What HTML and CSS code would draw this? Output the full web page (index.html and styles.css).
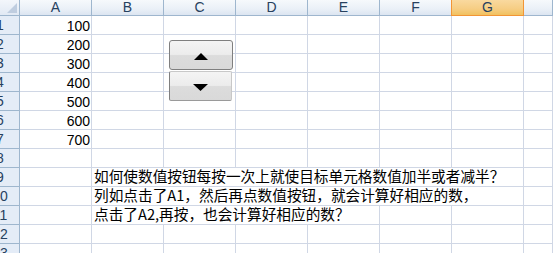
FILE: index.html
```html
<!DOCTYPE html>
<html lang="zh-CN">
<head>
    <meta charset="UTF-8">
    <title>Sheet1</title>
    <link rel="stylesheet" href="styles.css">
</head>
<body>
    <div class="sheet">
        <!-- column headers -->
        <div class="corner"></div>
        <div class="ch">A</div>
        <div class="ch">B</div>
        <div class="ch">C</div>
        <div class="ch">D</div>
        <div class="ch">E</div>
        <div class="ch">F</div>
        <div class="ch active">G</div>
        <div class="ch"></div>

        <div class="rh"><span>1</span></div><div class="c num">100</div><div class="c"></div><div class="c"></div><div class="c"></div><div class="c"></div><div class="c"></div><div class="c"></div><div class="c"></div>
        <div class="rh"><span>2</span></div><div class="c num">200</div><div class="c"></div><div class="c"></div><div class="c"></div><div class="c"></div><div class="c"></div><div class="c"></div><div class="c"></div>
        <div class="rh"><span>3</span></div><div class="c num">300</div><div class="c"></div><div class="c"></div><div class="c"></div><div class="c"></div><div class="c"></div><div class="c"></div><div class="c"></div>
        <div class="rh"><span>4</span></div><div class="c num">400</div><div class="c"></div><div class="c"></div><div class="c"></div><div class="c"></div><div class="c"></div><div class="c"></div><div class="c"></div>
        <div class="rh"><span>5</span></div><div class="c num">500</div><div class="c"></div><div class="c"></div><div class="c"></div><div class="c"></div><div class="c"></div><div class="c"></div><div class="c"></div>
        <div class="rh"><span>6</span></div><div class="c num">600</div><div class="c"></div><div class="c"></div><div class="c"></div><div class="c"></div><div class="c"></div><div class="c"></div><div class="c"></div>
        <div class="rh"><span>7</span></div><div class="c num">700</div><div class="c"></div><div class="c"></div><div class="c"></div><div class="c"></div><div class="c"></div><div class="c"></div><div class="c"></div>
        <div class="rh"><span>8</span></div><div class="c"></div><div class="c"></div><div class="c"></div><div class="c"></div><div class="c"></div><div class="c"></div><div class="c"></div><div class="c"></div>
        <div class="rh"><span>9</span></div><div class="c"></div><div class="c txt span6">如何使数值按钮每按一次上就使目标单元格数值加半或者减半？</div><div class="c"></div>
        <div class="rh"><span>10</span></div><div class="c"></div><div class="c txt span6">列如点击了A1，然后再点数值按钮，就会计算好相应的数，</div><div class="c"></div>
        <div class="rh"><span>11</span></div><div class="c"></div><div class="c txt span4">点击了A2,再按，也会计算好相应的数？</div><div class="c"></div><div class="c"></div><div class="c"></div>
        <div class="rh"><span>12</span></div><div class="c"></div><div class="c"></div><div class="c"></div><div class="c"></div><div class="c"></div><div class="c"></div><div class="c"></div><div class="c"></div>
        <div class="rh"><span>13</span></div><div class="c"></div><div class="c"></div><div class="c"></div><div class="c"></div><div class="c"></div><div class="c"></div><div class="c"></div><div class="c"></div>
    </div>

    <!-- spin button control floating over the sheet -->
    <div class="spin">
        <div class="spin-btn up">
            <svg width="14" height="7" viewBox="0 0 14 7"><polygon points="7,0 14,7 0,7" fill="#000"/></svg>
        </div>
        <div class="spin-btn down">
            <svg width="15" height="7" viewBox="0 0 15 7"><polygon points="0,0 15,0 7.5,7" fill="#000"/></svg>
        </div>
    </div>
</body>
</html>
```

FILE: styles.css
```css
body {
    margin: 0;
    background-color: white;
    overflow: hidden;
    font-family: 'Liberation Sans', Arial, sans-serif;
}

.sheet {
    display: grid;
    grid-template-columns: 20px repeat(7, 72px) 1fr;
    grid-template-rows: 16px repeat(13, 19px);
    width: 553px;
    height: 253px;
    overflow: hidden;
}

.corner {
    position: relative;
    background: linear-gradient(#f3f6fb, #e1e9f4);
    border-right: 1px solid #9eb6ce;
    border-bottom: 1px solid #9eb6ce;
}

.corner::after {
    content: '';
    position: absolute;
    right: 2px;
    bottom: 2px;
    border-left: 10px solid transparent;
    border-bottom: 10px solid #bfcde0;
}

.ch {
    background: linear-gradient(#f6f9fc 0%, #eaf0f7 60%, #dce5f1 100%);
    border-right: 1px solid #9eb6ce;
    border-bottom: 1px solid #9eb6ce;
    color: #27415f;
    font-size: 14px;
    line-height: 15px;
    text-align: center;
}

.ch.active {
    background: linear-gradient(#f9d99f 0%, #f6cd83 60%, #f1c15f 100%);
    border: 1px solid #f29536;
    border-top: none;
    margin-left: -1px;
}

.rh {
    background-color: #e4ecf7;
    border-right: 1px solid #9eb6ce;
    border-bottom: 1px solid #9eb6ce;
    overflow: hidden;
    color: #27415f;
    font-size: 14px;
    line-height: 19px;
}

.rh span {
    display: block;
    width: 38px;
    margin-left: -19px;
    text-align: center;
}

.c {
    border-right: 1px solid #d0d7e5;
    border-bottom: 1px solid #d0d7e5;
    font-size: 14px;
    line-height: 20px;
    color: #000;
    white-space: nowrap;
}

.num {
    text-align: right;
    padding-right: 1px;
}

.txt {
    font-family: 'Noto Sans CJK SC', 'Liberation Sans', sans-serif;
    font-size: 14.67px;
    line-height: 16px;
    padding-left: 2px;
}

.span6 {
    grid-column: span 6;
}

.span4 {
    grid-column: span 4;
}

.spin {
    position: absolute;
    left: 169px;
    top: 40px;
    width: 64px;
    display: flex;
    flex-direction: column;
    gap: 1px;
}

.spin-btn {
    height: 30px;
    box-sizing: border-box;
    display: flex;
    align-items: center;
    justify-content: center;
    background: linear-gradient(#f4f4f4 0%, #ececec 48%, #dcdcdc 52%, #d9d9d9 100%);
}

.spin-btn.up {
    border: 1px solid #7f7f7f;
    border-radius: 3px;
    padding-top: 3px;
}

.spin-btn.down {
    border: 1px solid #c8c8c8;
    border-left-color: #7f7f7f;
    border-bottom-color: #9a9a9a;
    border-radius: 2px;
    width: 63px;
    padding-top: 2px;
}
```
